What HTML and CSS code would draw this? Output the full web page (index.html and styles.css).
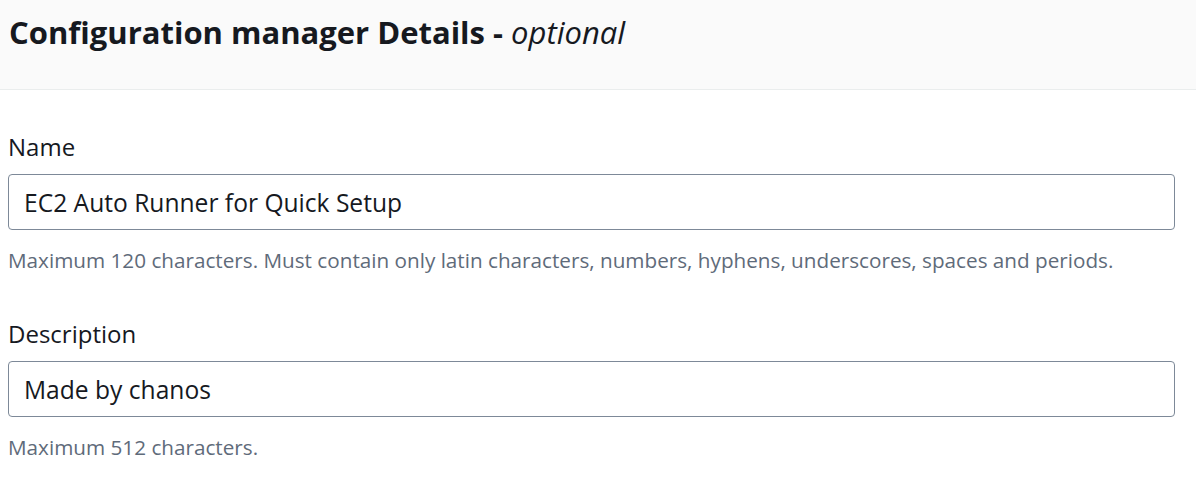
FILE: index.html
```html
<!DOCTYPE html>
<html lang="en">
<head>
<meta charset="utf-8">
<title>Configuration manager Details</title>
<link rel="stylesheet" href="styles.css">
</head>
<body>
<div class="panel">
  <div class="panel-header">
    <h2 class="panel-title">Configuration manager Details - <i class="optional">optional</i></h2>
  </div>
  <div class="panel-body">
    <div class="field">
      <label class="field-label" for="name">Name</label>
      <input class="field-input" id="name" type="text" value="EC2 Auto Runner for Quick Setup">
      <div class="field-hint">Maximum 120 characters. Must contain only latin characters, numbers, hyphens, underscores, spaces and periods.</div>
    </div>
    <div class="field">
      <label class="field-label" for="desc">Description</label>
      <input class="field-input" id="desc" type="text" value="Made by chanos">
      <div class="field-hint">Maximum 512 characters.</div>
    </div>
  </div>
</div>
</body>
</html>
```
FILE: styles.css
```css
html, body {
  margin: 0;
  padding: 0;
  background: #ffffff;
}
body {
  font-family: "Open Sans", "Noto Sans", sans-serif;
  color: #16191f;
}
.panel-header {
  background: #fafafa;
  height: 89px;
  border-bottom: 1px solid #eaeded;
  padding: 0 9px;
  box-sizing: content-box;
}
.panel-title {
  margin: 0;
  padding-top: 12px;
  font-size: 31px;
  line-height: 40px;
  font-weight: 700;
  color: #16191f;
}
.optional {
  font-weight: 400;
  font-style: italic;
}
.panel-body {
  padding: 41px 21px 0 8px;
  display: flex;
  flex-direction: column;
  gap: 44px;
}
.field {
  display: flex;
  flex-direction: column;
}
.field-label {
  font-size: 24px;
  line-height: 32px;
  margin-bottom: 11px;
  color: #16191f;
}
.field-input {
  height: 56px;
  box-sizing: border-box;
  border: 1px solid #7d8998;
  border-radius: 4px;
  padding: 0 15px;
  font-family: inherit;
  font-size: 24.6px;
  color: #16191f;
  background: #fff;
  outline: none;
}
.field-hint {
  margin-top: 16px;
  font-size: 20.7px;
  line-height: 28px;
  color: #5f6b7a;
}
```
